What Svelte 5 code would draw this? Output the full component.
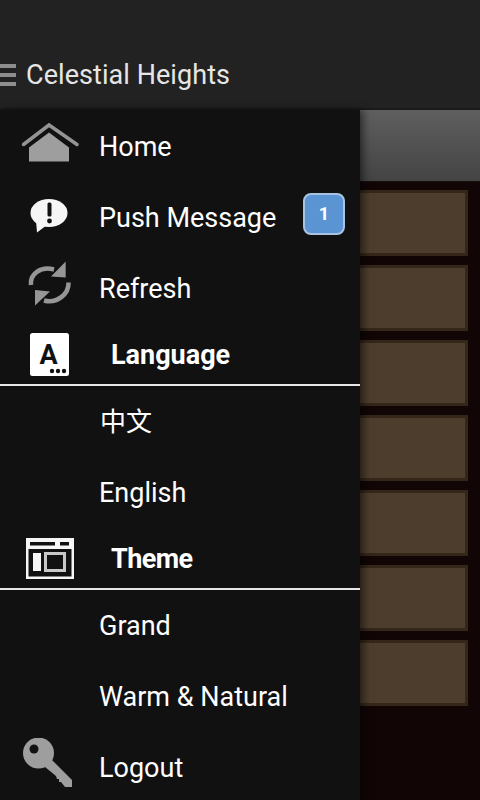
<script>
  const tiles = [0, 1, 2, 3, 4, 5, 6];
</script>

<div class="screen">
  <header class="topbar">
    <div class="menu-icon"><span></span><span></span><span></span></div>
    <h1>Celestial Heights</h1>
  </header>

  <div class="body">
    <main class="content">
      <div class="banner"></div>
      <div class="tiles">
        {#each tiles as t (t)}
          <div class="tile"></div>
        {/each}
      </div>
    </main>

    <nav class="drawer">
      <div class="row">
        <svg class="icon" width="60" height="50" viewBox="0 0 60 50">
          <path d="M2.500 22.500 L28 3 L56 22.500" fill="none" stroke="#949494" stroke-width="3.500" stroke-linecap="round" />
          <path d="M8 25.500 L28 10.500 L48 25.500 V39.500 H8 Z" fill="#9e9e9e" />
        </svg>
        <span>Home</span>
      </div>

      <div class="row">
        <svg class="icon" width="56" height="44" viewBox="0 0 56 44">
          <ellipse cx="28" cy="17" rx="18.500" ry="14" fill="#f6f6f6" />
          <path d="M15 24 L16 36.500 L26 29 Z" fill="#f6f6f6" />
          <rect x="26.500" y="6.500" width="4" height="14" rx="1.500" fill="#111" />
          <circle cx="28.500" cy="25" r="2.400" fill="#111" />
        </svg>
        <span>Push Message</span>
        <b class="badge">1</b>
      </div>

      <div class="row">
        <svg class="icon" width="56" height="60" viewBox="0 0 56 60">
          <path d="M10 26 C9 15 19 7 33 10.500" fill="none" stroke="#969696" stroke-width="4.500" />
          <path d="M44.700 2.500 V18.500 L30 17.500 Z" fill="#969696" />
          <path d="M47.500 23.500 C48 35 36 45 23 41.500" fill="none" stroke="#969696" stroke-width="4.500" />
          <path d="M14 46.500 V31 L29 32.500 Z" fill="#969696" />
        </svg>
        <span>Refresh</span>
      </div>

      <div class="section">
        <svg class="icon" width="56" height="44" viewBox="0 0 56 44">
          <rect x="9" y="1" width="39" height="43" rx="2.500" fill="#fff" />
          <text class="icon-letter" x="27.500" y="31.500" text-anchor="middle">A</text>
          <circle cx="31" cy="39" r="2.200" fill="#111" />
          <circle cx="37" cy="39" r="2.200" fill="#111" />
          <circle cx="43" cy="39" r="2.200" fill="#111" />
        </svg>
        <span>Language</span>
      </div>

      <div class="row"><span class="cjk">中文</span></div>
      <div class="row"><span>English</span></div>

      <div class="section">
        <svg class="icon" width="56" height="44" viewBox="0 0 56 44">
          <rect x="6.250" y="3.250" width="45.500" height="38.500" fill="none" stroke="#f6f6f6" stroke-width="2.500" />
          <rect x="7" y="4" width="44" height="9" fill="#f6f6f6" />
          <rect x="9" y="6" width="25" height="3.500" fill="#111" />
          <rect x="39" y="6" width="9" height="3.500" fill="#111" />
          <rect x="12" y="17" width="8" height="18" fill="#f6f6f6" />
          <rect x="24.500" y="17.500" width="19" height="17" fill="none" stroke="#c8c8c8" stroke-width="3" />
        </svg>
        <span class="narrow">Theme</span>
      </div>

      <div class="row"><span>Grand</span></div>
      <div class="row"><span>Warm &amp; Natural</span></div>

      <div class="row">
        <svg class="icon" width="56" height="60" viewBox="0 0 56 60">
          <circle cx="17.500" cy="15" r="15.500" fill="#9e9e9e" />
          <circle cx="13" cy="11" r="4.500" fill="#111" />
          <path d="M30 21 L51 42 V49 H44 L40 44 H38 V41 H36 L35 38 L24 29 Z" fill="#9e9e9e" />
        </svg>
        <span>Logout</span>
      </div>
    </nav>
  </div>
</div>

<style>
  :global(body) {
    margin: 0;
    background: #110505;
  }

  .screen {
    width: 480px;
    height: 800px;
    display: flex;
    flex-direction: column;
    overflow: hidden;
    font-family: Roboto, "Noto Sans CJK SC", sans-serif;
    color: #fff;
  }

  .topbar {
    flex: 0 0 110px;
    display: flex;
    align-items: flex-end;
    gap: 10px;
    padding-bottom: 17px;
    box-sizing: border-box;
    background: #222;
    border-bottom: 2px solid #1a1a1a;
  }

  .menu-icon {
    width: 16px;
    display: flex;
    flex-direction: column;
    gap: 5px;
    margin-bottom: 5px;
  }

  .menu-icon span {
    height: 4px;
    background: #8e8e8e;
  }

  h1 {
    margin: 0;
    font-size: 27px;
    font-weight: 400;
    line-height: 32px;
    letter-spacing: 0.06px;
    color: #e6e6e6;
  }

  .body {
    flex: 1;
    position: relative;
    min-height: 0;
  }

  .content {
    height: 100%;
    background: #110505;
  }

  .banner {
    height: 71px;
    background: linear-gradient(#5f5f5f, #444);
    border-bottom: 1px solid #111;
  }

  .tiles {
    display: flex;
    flex-direction: column;
    gap: 9px;
    padding: 8px 12px 0 340px;
  }

  .tile {
    height: 60px;
    background: #4d3d2c;
    border: 3px solid #35261a;
  }

  .drawer {
    position: absolute;
    top: 0;
    left: 0;
    width: 360px;
    height: 690px;
    box-sizing: border-box;
    padding-top: 1px;
    overflow: hidden;
    background: #111;
    box-shadow: 3px 0 8px rgba(0, 0, 0, 0.55);
  }

  .row {
    height: 71px;
    display: flex;
    align-items: center;
    position: relative;
    padding-left: 99px;
    font-size: 27px;
    line-height: 32px;
  }

  .section {
    height: 62px;
    box-sizing: border-box;
    display: flex;
    align-items: center;
    position: relative;
    padding-left: 111px;
    padding-top: 2px;
    font-size: 27px;
    font-weight: 700;
    border-bottom: 2px solid #e6e6e6;
  }

  .narrow {
    letter-spacing: -0.6px;
  }

  .icon {
    position: absolute;
    left: 21px;
    top: 50%;
    transform: translateY(-50%);
  }

  .icon-letter {
    font-size: 27px;
    font-weight: 700;
    fill: #111;
  }

  .cjk {
    font-family: "Noto Sans CJK SC", sans-serif;
    font-size: 26px;
    padding-left: 1px;
    padding-bottom: 4px;
  }

  .badge {
    position: absolute;
    left: 303px;
    top: calc(50% - 4px);
    transform: translateY(-50%);
    width: 42px;
    height: 42px;
    box-sizing: border-box;
    display: flex;
    align-items: center;
    justify-content: center;
    border: 2px solid #a9c4e2;
    border-radius: 8px;
    background: #5b94d2;
    font-size: 18px;
    font-weight: 700;
  }
</style>
